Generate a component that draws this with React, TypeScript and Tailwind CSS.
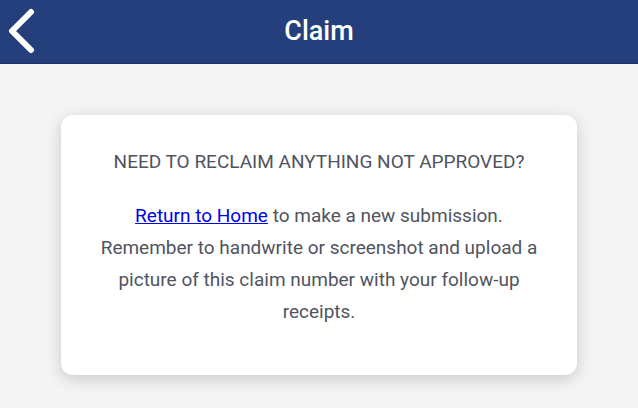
export default function App() {
  return (
    <div className="min-h-[408px] bg-[#f4f4f4] font-['Roboto',sans-serif]">
      <header className="relative flex h-[64px] items-center justify-center border-b border-[#1c336a] bg-[#243f7c]">
        <button className="absolute left-[6px] top-[8px] text-white" aria-label="Back">
          <svg width="30" height="46" viewBox="0 0 30 46" fill="none">
            <path d="M25 4 L6 23 L25 42" stroke="#fff" strokeWidth="6" strokeLinecap="round" strokeLinejoin="round" />
          </svg>
        </button>
        <h1 className="text-[27px] font-medium text-white">Claim</h1>
      </header>

      <main className="flex justify-center px-[61px] pt-[51px] pb-8">
        <div className="w-[516px] rounded-[12px] bg-white px-6 pt-[35px] pb-[47px] text-center text-[#50545f] shadow-[0_4px_16px_rgba(0,0,0,0.18)]">
          <p className="text-[19px] leading-[24px]">NEED TO RECLAIM ANYTHING NOT APPROVED?</p>
          <p className="mt-[26px] text-[19px] leading-[32px]">
            <a href="#" className="text-[#0000ee] underline">Return to Home</a> to make a new submission.
            <br />
            Remember to handwrite or screenshot and upload a picture of this claim number with your follow-up receipts.
          </p>
        </div>
      </main>
    </div>
  );
}
